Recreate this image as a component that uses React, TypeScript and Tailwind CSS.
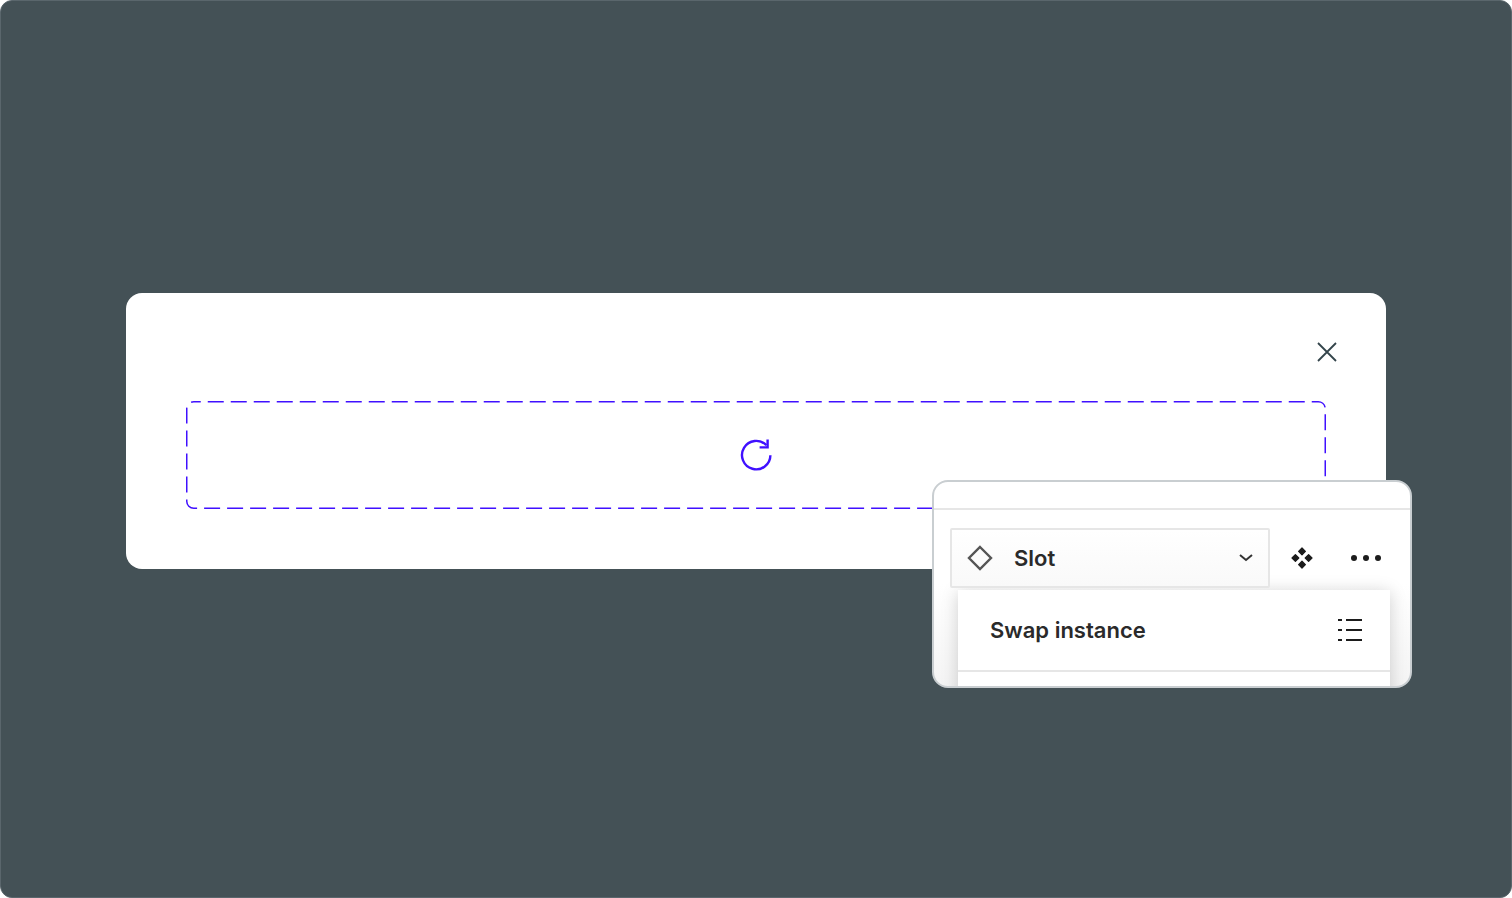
function DashedFrame() {
  return (
    <svg className="absolute inset-0 h-full w-full" aria-hidden="true">
      <rect
        x="0.75"
        y="0.75"
        width="1138.5"
        height="106.5"
        rx="7"
        fill="none"
        stroke="#4010ff"
        strokeWidth="1.5"
        strokeDasharray="16 7"
        strokeDashoffset="9"
      />
    </svg>
  );
}

function RefreshIcon() {
  return (
    <svg width="32" height="32" viewBox="0 0 32 32" fill="none" stroke="#4010ff" strokeWidth="2.4">
      <path d="M30.4 16.2A14.2 14.2 0 1 1 26.4 6.2" />
      <path d="M27.6 0.4v8h-8" />
    </svg>
  );
}

function CloseIcon() {
  return (
    <svg width="20" height="20" viewBox="0 0 20 20" fill="none" stroke="#33444b" strokeWidth="1.8">
      <path d="M1 1l18 18M19 1L1 19" />
    </svg>
  );
}

function DiamondIcon() {
  return (
    <svg width="26" height="26" viewBox="0 0 26 26" fill="none" stroke="#555" strokeWidth="2.4">
      <path d="M13 2L24 13 13 24 2 13z" />
    </svg>
  );
}

function ChevronIcon() {
  return (
    <svg width="14" height="8" viewBox="0 0 14 8" fill="none" stroke="#333" strokeWidth="2">
      <path d="M1 1l6 5 6-5" />
    </svg>
  );
}

function ComponentIcon() {
  return (
    <svg width="22" height="22" viewBox="0 0 22 22" fill="#1c1c1c" stroke="#1c1c1c" strokeWidth="1.2" strokeLinejoin="round">
      <path d="M11 1l3.4 3.4L11 7.8 7.6 4.4z" />
      <path d="M11 14.2l3.4 3.4L11 21l-3.4-3.4z" />
      <path d="M4.4 7.6L7.8 11l-3.4 3.4L1 11z" />
      <path d="M17.6 7.6L21 11l-3.4 3.4L14.2 11z" />
    </svg>
  );
}

function ListIcon() {
  return (
    <svg width="24" height="24" viewBox="0 0 24 24" fill="#1c1c1c">
      <rect x="0" y="1" width="4" height="2" />
      <rect x="8" y="1" width="16" height="2" />
      <rect x="0" y="11" width="4" height="2" />
      <rect x="8" y="11" width="16" height="2" />
      <rect x="0" y="21" width="4" height="2" />
      <rect x="8" y="21" width="16" height="2" />
    </svg>
  );
}

function InstancePopover() {
  return (
    <div className="absolute left-[806px] top-[187px] h-[208px] w-[480px] overflow-hidden rounded-[16px] border-2 border-[#c9ced1] bg-gradient-to-b from-white from-50% to-[#f4f4f4]">
      <div className="h-[28px] border-b-2 border-[#e6e6e6]" />
      <div className="flex items-center pl-[16px] pt-[18px]">
        <div className="flex h-[60px] w-[320px] items-center rounded-[2px] border-2 border-[#e6e6e6] bg-gradient-to-b from-white to-[#f9f9f9] pl-[15px] pr-[15px]">
          <DiamondIcon />
          <span className="ml-[21px] text-[22px] font-semibold text-[#2a2a2a]">Slot</span>
          <span className="ml-auto flex">
            <ChevronIcon />
          </span>
        </div>
        <span className="ml-[21px] flex">
          <ComponentIcon />
        </span>
        <span className="ml-[38px] flex gap-[6px]">
          <span className="h-[6px] w-[6px] rounded-full bg-[#1c1c1c]" />
          <span className="h-[6px] w-[6px] rounded-full bg-[#1c1c1c]" />
          <span className="h-[6px] w-[6px] rounded-full bg-[#1c1c1c]" />
        </span>
      </div>
      <div className="ml-[24px] mt-[2px] h-[120px] w-[432px] bg-white shadow-[0_2px_16px_rgba(0,0,0,0.18)]">
        <div className="flex h-[82px] items-center justify-between border-b-2 border-[#e6e6e6] pl-[32px] pr-[28px]">
          <span className="text-[22px] font-semibold text-[#2a2a2a]">Swap instance</span>
          <ListIcon />
        </div>
      </div>
    </div>
  );
}

export default function App() {
  return (
    <div className="h-[898px] w-[1512px] overflow-hidden bg-white font-['Inter',sans-serif]">
      <div className="h-full rounded-[12px] border border-[#5a666c] bg-[#445156] pl-[125px] pt-[292px]">
        <div className="relative h-[276px] w-[1260px] rounded-[16px] bg-white pl-[60px] pt-[108px]">
          <span className="absolute right-[49px] top-[49px] flex">
            <CloseIcon />
          </span>
          <div className="relative flex h-[108px] w-[1140px] items-center justify-center">
            <DashedFrame />
            <RefreshIcon />
          </div>
          <InstancePopover />
        </div>
      </div>
    </div>
  );
}
